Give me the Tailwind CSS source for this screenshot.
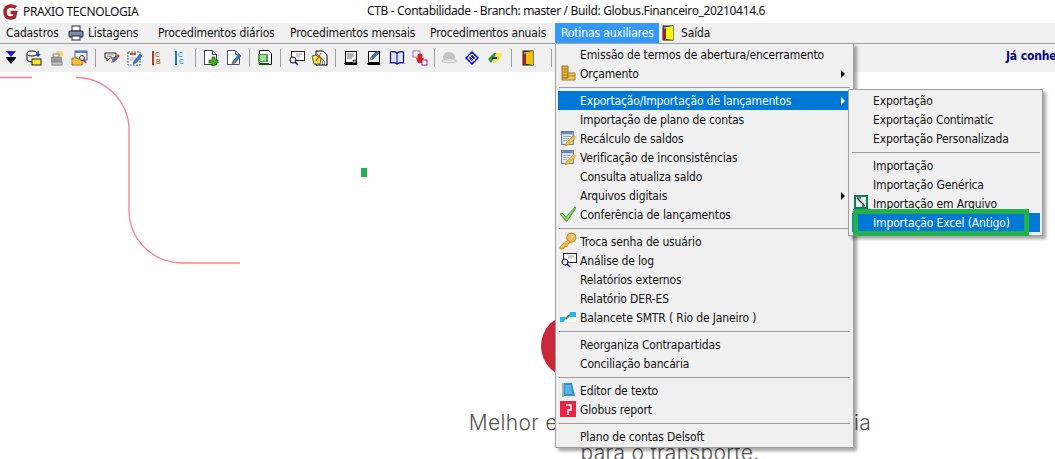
<!doctype html>
<html lang="pt">
<head>
<meta charset="utf-8">
<script src="https://cdn.jsdelivr.net/npm/@tailwindcss/browser@4"></script>
</head>
<body class="bg-white">
<div class="relative w-[1055px] h-[459px] overflow-hidden bg-white text-[12px] tracking-[-0.14px] text-[#111] font-['DejaVu_Sans',sans-serif] font-stretch-condensed">

  <!-- title bar -->
  <header class="relative h-[23px] flex items-center pl-[2px] bg-white font-['Noto_Sans',sans-serif] font-stretch-normal tracking-[-0.35px]">
    <svg width="17" height="16" viewBox="0 0 17 16" fill="none"><path d="M14 3.500Q12 2 9 2 3 2 3 8t5.500 6q2.500 0 4-1l1-4.500H8.500" stroke="#a5262f" stroke-width="3.500"/></svg>
    <span class="ml-[4px] whitespace-nowrap">PRAXIO TECNOLOGIA</span>
    <span class="absolute left-[367px] top-[2px] whitespace-nowrap">CTB - Contabilidade - Branch: master / Build: Globus.Financeiro_20210414.6</span>
  </header>

  <!-- menu bar -->
  <nav class="h-[20px] flex items-center bg-[#f0f0f0] whitespace-nowrap pl-[6px]">
    <span class="w-[62px]">Cadastros</span>
    <svg width="16" height="16" viewBox="0 0 16 16" class="mr-[4px]"><rect x="4" y="1" width="8" height="5" fill="#fff" stroke="#223"/><rect x="1" y="6" width="14" height="6" rx="1" fill="#7a8ea8" stroke="#123"/><rect x="4" y="11" width="8" height="4" fill="#fff" stroke="#223"/></svg>
    <span class="w-[70px]">Listagens</span>
    <span class="w-[132px]">Procedimentos diários</span>
    <span class="w-[140px]">Procedimentos mensais</span>
    <span class="w-[125px]">Procedimentos anuais</span>
    <span class="w-[104px] h-[20px] leading-[20px] pl-[6px] bg-[#3399ff] text-white">Rotinas auxiliares</span>
    <svg width="12" height="16" viewBox="0 0 12 16" class="ml-[3px] mr-[7px]"><rect x=".5" y=".5" width="11" height="15" fill="#111"/><path d="M4 2l7-1v14l-7-1z" fill="#ff0"/><rect x="1" y="1" width="3" height="14" fill="#a02020"/><rect x="2" y="2" width="2" height="2" fill="#20c0d0"/></svg>
    <span>Saída</span>
  </nav>

  <!-- toolbar -->
  <div class="h-[29px] border-t border-[#a0a0a0] bg-[#f0f0f0] flex items-center relative">
    <span class="w-[22px] flex justify-center"><svg width="12" height="14" viewBox="0 0 12 14"><path d="M1 0h10L6 6z" fill="#1a1ae0"/><rect x="1" y="6" width="10" height="1" fill="#000"/><path d="M1 7h10l-5 6z" fill="#000"/></svg></span>
    <span class="w-[23px] flex justify-center"><svg width="16" height="16" viewBox="0 0 16 16"><ellipse cx="6" cy="3.500" rx="5" ry="2.500" fill="#fff" stroke="#000"/><path d="M1 4v6q2 2 5 2" fill="#fff" stroke="#000"/><rect x="6" y="9" width="9" height="6" fill="#f5e52a" stroke="#222"/><path d="M12 1v5M10 4l2 2 2-2" stroke="#1840c0" fill="none" stroke-width="1.500"/></svg></span>
    <span class="w-[23px] flex justify-center"><svg width="16" height="16" viewBox="0 0 16 16"><path d="M7 1h7v6H7z" fill="#f2d878"/><rect x="2" y="7" width="11" height="5" fill="#9a9a9a"/><rect x="4" y="4" width="6" height="3" fill="#e8e8e8" stroke="#888"/><rect x="3" y="12" width="10" height="3" fill="#c8c8c8" stroke="#808080"/></svg></span>
    <span class="w-[23px] flex justify-center"><svg width="17" height="16" viewBox="0 0 17 16"><rect x="4" y="1" width="12" height="9" fill="#fff" stroke="#3a5a9a"/><rect x="4" y="1" width="12" height="2" fill="#4a7ac8"/><path d="M1 8h5l1 1h6l-2 6H1z" fill="#f0c040" stroke="#a87818"/><circle cx="11" cy="8" r="2.500" fill="#dde" stroke="#444"/><path d="M13 10l2 3" stroke="#a03030" stroke-width="1.500"/></svg></span>
    <span class="w-[9px] flex justify-center"><i class="block w-px h-[18px] bg-[#a0a0a0]"></i></span>
    <span class="w-[23px] flex justify-center"><svg width="16" height="16" viewBox="0 0 16 16"><path d="M1 3h11v5H6l-3 3V8H1z" fill="#fff" stroke="#222"/><path d="M3 5h7M3 6.500h5" stroke="#999"/><path d="M7 13l1-3 6-6 2 2-6 6z" fill="#e05a20"/><path d="M12 6l2 2-4 4-2-2z" fill="#2a68c8"/></svg></span>
    <span class="w-[23px] flex justify-center"><svg width="16" height="16" viewBox="0 0 16 16"><rect x="1" y="2" width="12" height="13" fill="#fff" stroke="#406090" stroke-dasharray="2 1"/><rect x="3" y="3" width="6" height="2" fill="#e04828"/><path d="M3 8h6M3 10h4" stroke="#b0b0b0"/><path d="M6 14l1-3 6-7 2 2-6 7z" fill="#3a78d8" stroke="#204080" stroke-width=".5"/></svg></span>
    <span class="w-[23px] flex justify-center"><svg width="14" height="16" viewBox="0 0 14 16"><rect x="2" y="1" width="11" height="14" fill="#f6eee8"/><rect x="1" y="1" width="2" height="14" fill="#b04020"/><text x="4" y="7" font-size="7" fill="#b04020" font-family="Liberation Sans">C</text><text x="5" y="14" font-size="7" fill="#b04020" font-family="Liberation Sans">B</text></svg></span>
    <span class="w-[23px] flex justify-center"><svg width="14" height="16" viewBox="0 0 14 16"><rect x="2" y="1" width="11" height="14" fill="#eef4fc"/><rect x="1" y="1" width="2" height="14" fill="#2070d0"/><text x="4" y="7" font-size="7" fill="#2070d0" font-family="Liberation Sans">C</text><text x="5" y="14" font-size="7" fill="#2070d0" font-family="Liberation Sans">C</text></svg></span>
    <span class="w-[7px] flex justify-center"><i class="block w-px h-[18px] bg-[#a0a0a0]"></i></span>
    <span class="w-[23px] flex justify-center"><svg width="16" height="16" viewBox="0 0 16 16"><path d="M1.500.5h8l4 4v10h-12z" fill="#fff" stroke="#345"/><path d="M9.500.5v4h4" fill="#dde" stroke="#345"/><path d="M9 7h3v3h3v3h-3v3H9v-3H6v-3h3z" fill="#48b020" stroke="#1a5a10" stroke-width=".7"/></svg></span>
    <span class="w-[23px] flex justify-center"><svg width="16" height="16" viewBox="0 0 16 16"><path d="M1.500.5h8l4 4v10h-12z" fill="#fff" stroke="#456"/><path d="M9.500.5v4h4" fill="#dde" stroke="#456"/><path d="M6 14l1-3 6-7 2 2-6 7z" fill="#3a78d8" stroke="#204080" stroke-width=".5"/><path d="M6 14l1-3 2 2z" fill="#e05a20"/></svg></span>
    <span class="w-[8px] flex justify-center"><i class="block w-px h-[18px] bg-[#a0a0a0]"></i></span>
    <span class="w-[23px] flex justify-center"><svg width="16" height="16" viewBox="0 0 16 16"><path d="M2.500.5h9l3 3v11h-12z" fill="#fff" stroke="#000"/><rect x="1" y="4" width="10" height="8" fill="#4f9a50"/><rect x="3" y="5" width="6" height="6" fill="#a8d8a0"/><path d="M1 13h11v2H3z" fill="#1a4a1a"/></svg></span>
    <span class="w-[9px] flex justify-center"><i class="block w-px h-[18px] bg-[#a0a0a0]"></i></span>
    <span class="w-[23px] flex justify-center"><svg width="17" height="16" viewBox="0 0 17 16"><rect x="3.500" y="1.500" width="13" height="9" fill="#fff" stroke="#222"/><path d="M8 4h6M8 6h4" stroke="#999"/><circle cx="5" cy="10" r="3" fill="#eef" stroke="#000"/><path d="M7 12l3 3" stroke="#0000c0" stroke-width="1.500"/></svg></span>
    <span class="w-[23px] flex justify-center"><svg width="17" height="16" viewBox="0 0 17 16"><path d="M5 1h7l4 4v10H5z" fill="#fff" stroke="#000"/><path d="M1 6l4-1 5 4-1 5H3z" fill="#f5e84a" stroke="#555"/><path d="M6 4l7 7M10 3l-5 8" stroke="#b06020" stroke-width="1.200"/><path d="M11 12h4M11 14h4" stroke="#000" stroke-dasharray="1 1"/></svg></span>
    <span class="w-[8px] flex justify-center"><i class="block w-px h-[18px] bg-[#a0a0a0]"></i></span>
    <span class="w-[23px] flex justify-center"><svg width="16" height="16" viewBox="0 0 16 16"><rect x="2.500" y="1.500" width="11" height="11" fill="#fff" stroke="#000"/><path d="M4 4h7M4 6h7M4 8h5" stroke="#666"/><path d="M1 13h13v2H2z" fill="#000"/><rect x="10" y="10" width="3" height="3" fill="#aaa" stroke="#000" stroke-width=".5"/></svg></span>
    <span class="w-[23px] flex justify-center"><svg width="16" height="16" viewBox="0 0 16 16"><rect x="2.500" y="1.500" width="11" height="11" fill="#fff" stroke="#000"/><path d="M4 10l1-3 6-6 2 2-6 6z" fill="#3070d8" stroke="#203080" stroke-width=".5"/><path d="M4 10l1-3 2 2z" fill="#e07020"/><path d="M1 13h13v2H2z" fill="#000"/></svg></span>
    <span class="w-[23px] flex justify-center"><svg width="16" height="16" viewBox="0 0 16 16"><path d="M8 3Q5 1 1.500 2v11q3.500-1 6.500 1 3-2 6.500-1V2Q11 1 8 3z" fill="#dde6ff" stroke="#000080" stroke-width="1.200"/><path d="M8 3v11" stroke="#000080"/></svg></span>
    <span class="w-[23px] flex justify-center"><svg width="16" height="16" viewBox="0 0 16 16"><rect x="1" y="1" width="7" height="6" fill="#fff" stroke="#c060a0"/><circle cx="8" cy="6" r="2.500" fill="#e02020"/><path d="M4 8h8l-2 5H6z" fill="#e02020"/><rect x="10" y="10" width="5" height="5" fill="#fff" stroke="#803090"/></svg></span>
    <span class="w-[6px] flex justify-center"><i class="block w-px h-[18px] bg-[#a0a0a0]"></i></span>
    <span class="w-[23px] flex justify-center"><svg width="16" height="14" viewBox="0 0 16 14"><ellipse cx="8" cy="6" rx="6" ry="5" fill="#c4c4c4"/><path d="M1 9q7-3 14 0v2q-7 2-14 0z" fill="#e2e2e2" stroke="#aaa" stroke-width=".5"/></svg></span>
    <span class="w-[23px] flex justify-center"><svg width="16" height="16" viewBox="0 0 16 16"><path d="M8 1l7 7-7 7-7-7z" fill="#0000e0"/><path d="M8 4l4 4-4 4-4-4z" fill="none" stroke="#fff" stroke-width="1.200"/><path d="M5 5l6 6" stroke="#fff"/></svg></span>
    <span class="w-[23px] flex justify-center"><svg width="16" height="12" viewBox="0 0 16 12"><path d="M1 7l6-6h3L4 11z" fill="#2a9a30"/><path d="M9 1h6l-1 5-6 5H5z" fill="#f5e84a"/><path d="M5 6h5" stroke="#1a30b0" stroke-width="2"/></svg></span>
    <span class="w-[10px] flex justify-center"><i class="block w-px h-[18px] bg-[#a0a0a0]"></i></span>
    <span class="w-[23px] flex justify-center"><svg width="12" height="16" viewBox="0 0 12 16"><rect x=".5" y=".5" width="11" height="15" fill="#111"/><path d="M4 2l7-1v14l-7-1z" fill="#f2c010"/><rect x="1" y="1" width="3" height="14" fill="#a02020"/><rect x="2" y="2" width="2" height="2" fill="#20b0c0"/></svg></span>
    <span class="w-[24px] flex justify-center"><i class="block w-px h-[18px] bg-[#a0a0a0]"></i></span>
    <span class="absolute left-[1006px] top-[3px] font-bold text-[#000080] whitespace-nowrap">Já conhece</span>
  </div>

  <!-- page backdrop (free canvas) -->
  <svg class="absolute left-0 top-0" width="1055" height="459" viewBox="0 0 1055 459" fill="none">
    <defs><linearGradient id="redball" x1="0" x2="1" y1="0" y2="0"><stop offset="0" stop-color="#c4283a"/><stop offset="1" stop-color="#ee2244"/></linearGradient></defs>
    <path d="M0 77.500H32M76 77.500A53 53 0 0 1 129 130.500V210A53 53 0 0 0 182 263H240" stroke="#fb7f92" stroke-width="1.300"/>
    <rect x="361" y="168" width="6" height="9" fill="#22b14c"/>
    <circle cx="573" cy="346" r="32" fill="url(#redball)"/>
  </svg>
  <div class="absolute left-[370px] top-[408px] w-[600px] text-center text-[21px] leading-[30px] tracking-[0.3px] text-[#555] font-['Inter',sans-serif] font-light font-stretch-normal">
    <p>Melhor experiência e a maior tecnologia</p>
    <p>para o transporte.</p>
  </div>

  <!-- main dropdown -->
  <div class="absolute left-[555px] top-[43px] w-[299px] h-[405px] border border-[#a0a0a0] bg-[#f0f0f0] shadow-[3px_3px_3px_rgba(0,0,0,0.35)] pt-[1px] pl-[2px] pr-[5px]">
    <div class="h-[19px] flex items-center pl-[22px]">Emissão de termos de abertura/encerramento</div>
    <div class="relative h-[19px] flex items-center pl-[22px]">
      <svg class="absolute left-[1px] top-[0px]" width="18" height="18" viewBox="0 0 18 18"><path d="M3 2h6v12H3z" fill="#e8b840" stroke="#a07820"/><path d="M3 5h6M3 8h6M3 11h6" stroke="#a07820"/><path d="M9 9h7v7H3v-2h6z" fill="#f0c860" stroke="#a07820"/><path d="M9 12h7" stroke="#a07820"/></svg>
      Orçamento
      <i class="absolute right-[3px] top-[6px] border-y-[4px] border-l-[4px] border-y-transparent border-l-black"></i>
    </div>
    <div class="h-[8px] flex items-center pl-[1px] -mr-[2px]"><i class="block w-full h-px bg-[#a0a0a0]"></i></div>
    <div class="relative h-[19px] flex items-center pl-[22px] bg-[#0078d7] text-white">
      Exportação/Importação de lançamentos
      <i class="absolute right-[3px] top-[6px] border-y-[4px] border-l-[4px] border-y-transparent border-l-white"></i>
    </div>
    <div class="h-[19px] flex items-center pl-[22px]">Importação de plano de contas</div>
    <div class="relative h-[19px] flex items-center pl-[22px]">
      <svg class="absolute left-[2px] top-[1px]" width="17" height="17" viewBox="0 0 16 16"><rect x="1.500" y="1.500" width="11" height="12" fill="#f4f4f4" stroke="#5a7090"/><rect x="2" y="2" width="10" height="2" fill="#5a80b8"/><path d="M3 6h7M3 8h5M3 10h4" stroke="#9ab"/><path d="M5 15l1-3 7-7 2 2-7 7z" fill="#f0c040" stroke="#a87818" stroke-width=".5"/></svg>
      Recálculo de saldos
    </div>
    <div class="relative h-[19px] flex items-center pl-[22px]">
      <svg class="absolute left-[2px] top-[1px]" width="17" height="17" viewBox="0 0 16 16"><rect x="1.500" y="1.500" width="11" height="12" fill="#f4f4f4" stroke="#5a7090"/><rect x="2" y="2" width="10" height="2" fill="#5a80b8"/><path d="M3 6h7M3 8h5M3 10h4" stroke="#9ab"/><path d="M5 15l1-3 7-7 2 2-7 7z" fill="#f0c040" stroke="#a87818" stroke-width=".5"/></svg>
      Verificação de inconsistências
    </div>
    <div class="h-[19px] flex items-center pl-[22px]">Consulta atualiza saldo</div>
    <div class="relative h-[19px] flex items-center pl-[22px]">
      Arquivos digitais
      <i class="absolute right-[3px] top-[6px] border-y-[4px] border-l-[4px] border-y-transparent border-l-black"></i>
    </div>
    <div class="relative h-[19px] flex items-center pl-[22px]">
      <svg class="absolute left-[1px] top-[1px]" width="18" height="16" viewBox="0 0 18 16"><path d="M1 8l2-1 4 4L16 1l1 1-9 13H7z" fill="#88d860" stroke="#3a9030" stroke-width=".8"/></svg>
      Conferência de lançamentos
    </div>
    <div class="h-[8px] flex items-center pl-[1px] -mr-[2px]"><i class="block w-full h-px bg-[#a0a0a0]"></i></div>
    <div class="relative h-[19px] flex items-center pl-[22px]">
      <svg class="absolute left-[1px] top-[0px]" width="18" height="18" viewBox="0 0 16 16"><circle cx="11" cy="5" r="4" fill="#f0c050" stroke="#b88820"/><path d="M8 7L1 13v2h3l1-2h2l1-2 2-2z" fill="#f0c050" stroke="#b88820" stroke-width=".8"/><circle cx="12" cy="4" r="1" fill="#fff"/></svg>
      Troca senha de usuário
    </div>
    <div class="relative h-[19px] flex items-center pl-[22px]">
      <svg class="absolute left-[2px] top-[1px]" width="17" height="16" viewBox="0 0 17 16"><rect x="3.500" y="1.500" width="13" height="9" fill="#fff" stroke="#222"/><path d="M8 4h6M8 6h4" stroke="#999"/><circle cx="5" cy="10" r="3" fill="#eef" stroke="#000"/><path d="M7 12l3 3" stroke="#0000c0" stroke-width="1.500"/></svg>
      Análise de log
    </div>
    <div class="h-[19px] flex items-center pl-[22px]">Relatórios externos</div>
    <div class="h-[19px] flex items-center pl-[22px]">Relatório DER-ES</div>
    <div class="relative h-[19px] flex items-center pl-[22px]">
      <svg class="absolute left-[2px] top-[1px]" width="16" height="16" viewBox="0 0 16 16"><rect y="3" width="16" height="10" fill="#fff"/><path d="M0 8h6L4 13H0zM10 3h6v5h-8z" fill="#20b8f0"/><path d="M6 10l3-4" stroke="#2a7a40" stroke-width="2"/><path d="M7 9l3-2" stroke="#c8a030"/></svg>
      Balancete SMTR ( Rio de Janeiro )
    </div>
    <div class="h-[8px] flex items-center pl-[1px] -mr-[2px]"><i class="block w-full h-px bg-[#a0a0a0]"></i></div>
    <div class="h-[19px] flex items-center pl-[22px]">Reorganiza Contrapartidas</div>
    <div class="h-[19px] flex items-center pl-[22px]">Conciliação bancária</div>
    <div class="h-[8px] flex items-center pl-[1px] -mr-[2px]"><i class="block w-full h-px bg-[#a0a0a0]"></i></div>
    <div class="relative h-[19px] flex items-center pl-[22px]">
      <svg class="absolute left-[2px] top-[1px]" width="16" height="16" viewBox="0 0 16 16"><path d="M2 1h10l3 13H4l-2 1z" fill="#3a90d8"/><path d="M2 1h2v14H2z" fill="#9ab8a8"/><path d="M5 3h6l1 9H5z" fill="#58b0ec"/></svg>
      Editor de texto
    </div>
    <div class="relative h-[19px] flex items-center pl-[22px]">
      <svg class="absolute left-[2px] top-[1px]" width="16" height="16" viewBox="0 0 16 16"><rect width="16" height="16" fill="#ee2244"/><path d="M6 4h5v5H8v5" stroke="#fff" stroke-width="1.500" fill="none"/></svg>
      Globus report
    </div>
    <div class="h-[8px] flex items-center pl-[1px] -mr-[2px]"><i class="block w-full h-px bg-[#a0a0a0]"></i></div>
    <div class="h-[19px] flex items-center pl-[22px]">Plano de contas Delsoft</div>
  </div>

  <!-- submenu -->
  <div class="absolute left-[848px] top-[89px] w-[195px] h-[147px] border border-[#a0a0a0] bg-[#f0f0f0] shadow-[3px_3px_3px_rgba(0,0,0,0.35)] pt-[1px] pl-[3px] pr-[2px]">
    <div class="h-[19px] flex items-center pl-[21px]">Exportação</div>
    <div class="h-[19px] flex items-center pl-[21px]">Exportação Contimatic</div>
    <div class="h-[19px] flex items-center pl-[21px]">Exportação Personalizada</div>
    <div class="h-[8px] flex items-center"><i class="block w-full h-px bg-[#a0a0a0]"></i></div>
    <div class="h-[19px] flex items-center pl-[21px]">Importação</div>
    <div class="h-[19px] flex items-center pl-[21px]">Importação Genérica</div>
    <div class="relative h-[19px] flex items-center pl-[21px]">
      <svg class="absolute left-[2px] top-[1px]" width="14" height="14" viewBox="0 0 14 14"><rect x="1" y="1" width="12" height="12" fill="#dff0e8" stroke="#0f7a5a" stroke-width="2"/><path d="M3 3l8 8M3 3h4M8 11h3" stroke="#123" stroke-width="1.200"/></svg>
      Importação em Arquivo
    </div>
    <div class="h-[19px] flex items-center pl-[21px] bg-[#0078d7] text-white">Importação Excel (Antigo)</div>
  </div>

  <!-- green annotation -->
  <div class="absolute left-[853px] top-[209px] w-[176px] h-[27px] border-[5px] border-[#22b14c]"></div>
</div>
</body>
</html>
